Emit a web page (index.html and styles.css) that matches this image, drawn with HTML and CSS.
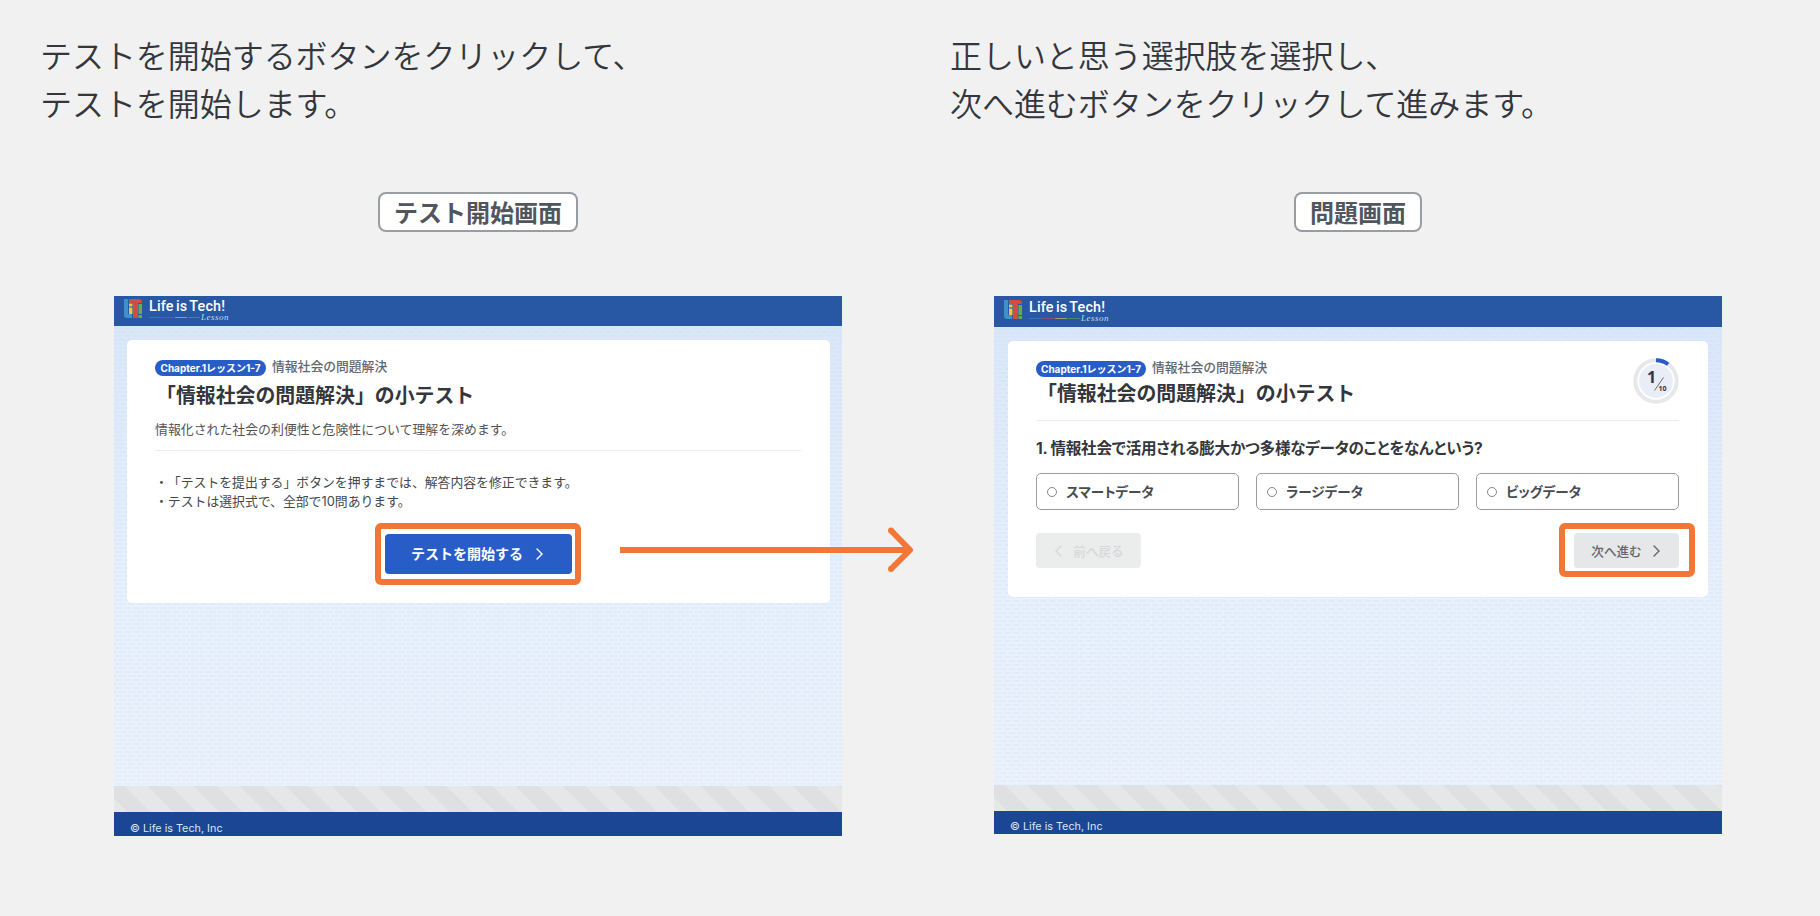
FILE: index.html
```html
<!DOCTYPE html>
<html lang="ja">

<head>
    <meta charset="UTF-8">
    <meta name="viewport" content="width=device-width, initial-scale=1.0">
    <title>小テストの受け方</title>
    <link rel="stylesheet" href="styles.css">
</head>

<body>
    <svg class="symbols" width="0" height="0">
        <symbol id="logo" viewBox="0 0 18 19">
            <path d="M0 0h4v15h4v4H3a3 3 0 0 1-3-3z" fill="#3f92c8"/>
            <path d="M5 0h10a3 3 0 0 1 3 3v1h-4v15H9V4H5z" fill="#cf4d43"/>
            <path d="M5 4.600h3.500v3H5zM5 8.500h3.500V15H5z" fill="#f2c437"/>
            <path d="M14.500 5H18v10h-3.500zM14.500 16H18v3h-3.500z" fill="#67ad45"/>
        </symbol>
        <symbol id="chevron" viewBox="0 0 7 12">
            <path d="M1 1l5 5-5 5" fill="none" stroke="currentColor" stroke-width="1.400" stroke-linecap="round"/>
        </symbol>
    </svg>

    <main class="guide">
        <section class="step step-start">
            <h2>テストを開始するボタンをクリックして、<br>テストを開始します。</h2>
            <div class="figure">
                <span class="label">テスト開始画面</span>
                <div class="screen">
                    <header class="bar">
                        <svg class="logo"><use href="#logo"/></svg>
                        <div class="brand">
                            <span class="brand-name">Life is Tech!</span>
                            <div class="brand-sub"><i></i><i></i><i></i><i></i><em>Lesson</em></div>
                        </div>
                    </header>
                    <div class="content">
                        <div class="card">
                            <div class="meta"><span class="chapter">Chapter.1レッスン1-7</span><span class="subject">情報社会の問題解決</span></div>
                            <h1>「情報社会の問題解決」の小テスト</h1>
                            <p class="desc">情報化された社会の利便性と危険性について理解を深めます。</p>
                            <ul class="notes">
                                <li>・「テストを提出する」ボタンを押すまでは、解答内容を修正できます。</li>
                                <li>・テストは選択式で、全部で10問あります。</li>
                            </ul>
                            <button class="btn btn-start marked"><span>テストを開始する</span><svg class="chevron"><use href="#chevron"/></svg></button>
                        </div>
                    </div>
                    <div class="stripes"></div>
                    <footer>© Life is Tech, Inc</footer>
                </div>
            </div>
        </section>

        <section class="step step-question">
            <h2>正しいと思う選択肢を選択し、<br>次へ進むボタンをクリックして進みます。</h2>
            <div class="figure">
                <span class="label">問題画面</span>
                <div class="screen">
                    <header class="bar">
                        <svg class="logo"><use href="#logo"/></svg>
                        <div class="brand">
                            <span class="brand-name">Life is Tech!</span>
                            <div class="brand-sub"><i></i><i></i><i></i><i></i><em>Lesson</em></div>
                        </div>
                    </header>
                    <div class="content">
                        <div class="card">
                            <div class="card-head">
                                <div>
                                    <div class="meta"><span class="chapter">Chapter.1レッスン1-7</span><span class="subject">情報社会の問題解決</span></div>
                                    <h1>「情報社会の問題解決」の小テスト</h1>
                                </div>
                                <svg class="progress" viewBox="0 0 46 46">
                                    <circle cx="23" cy="23" r="20.700" fill="none" stroke="#e7e8e9" stroke-width="4"/>
                                    <path d="M23 2.300A20.700 20.700 0 0 1 35.200 6.250" fill="none" stroke="#285dc7" stroke-width="4"/>
                                    <circle cx="23" cy="23" r="17" fill="#e9edf8"/>
                                    <text x="14" y="24.500" class="now">1</text>
                                    <path d="M30.500 19.500l-9 13" stroke="#444950" stroke-width=".8"/>
                                    <text x="25.500" y="33" class="total">10</text>
                                </svg>
                            </div>
                            <p class="question">1. 情報社会で活用される膨大かつ多様なデータのことをなんという?</p>
                            <div class="options">
                                <label><input type="radio" name="answer"><span>スマートデータ</span></label>
                                <label><input type="radio" name="answer"><span>ラージデータ</span></label>
                                <label><input type="radio" name="answer"><span>ビッグデータ</span></label>
                            </div>
                            <div class="actions">
                                <button class="btn btn-prev"><svg class="chevron"><use href="#chevron"/></svg><span>前へ戻る</span></button>
                                <button class="btn btn-next marked"><span>次へ進む</span><svg class="chevron"><use href="#chevron"/></svg></button>
                            </div>
                        </div>
                    </div>
                    <div class="stripes"></div>
                    <footer>© Life is Tech, Inc</footer>
                </div>
            </div>
        </section>

        <svg class="arrow" viewBox="0 0 296 48">
            <path d="M0 24h290M271 4.500L290 24 271 43" fill="none" stroke="#f27737" stroke-width="6" stroke-linejoin="round"/>
            <circle cx="271" cy="4.500" r="3" fill="#f27737"/>
            <circle cx="271" cy="43" r="3" fill="#f27737"/>
        </svg>
    </main>
</body>

</html>
```
FILE: styles.css
```css
* {
  box-sizing: border-box;
}
body {
  margin: 0;
  background-color: #f1f1f1;
  color: #33363c;
  font-family: Inter, 'Noto Sans CJK JP', sans-serif;
  text-spacing-trim: space-all;
}
h1, h2, p, ul {
  margin: 0;
  padding: 0;
}
.symbols {
  position: absolute;
}
.guide {
  position: relative;
  display: grid;
  grid-template-columns: 910px 910px;
  height: 916px;
  padding-top: 30px;
  overflow: hidden;
}
h2 {
  padding-left: 40px;
  font-family: 'Noto Sans CJK JP', sans-serif;
  font-size: 32px;
  font-weight: 350;
  line-height: 48px;
  letter-spacing: -0.05px;
  white-space: nowrap;
}
.figure {
  display: flex;
  flex-direction: column;
  align-items: center;
  gap: 64px;
  width: 728px;
  margin: 66px 0 0 114px;
}
.step-question .figure {
  margin-left: 84px;
}
.label {
  height: 40px;
  padding: 0 14px;
  border: 2px solid #989da3;
  border-radius: 8px;
  background-color: #fff;
  color: #50565c;
  font-family: 'Noto Sans CJK JP', sans-serif;
  font-size: 24px;
  font-weight: 700;
  line-height: 35px;
}
.screen {
  display: flex;
  flex-direction: column;
  width: 728px;
  height: 540px;
}
.step-question .screen {
  height: 538px;
}

/* header */
.bar {
  display: flex;
  align-items: flex-start;
  gap: 7px;
  height: 30px;
  padding: 3px 10px 0;
  background-color: #2857a4;
}
.step-question .bar {
  height: 31px;
  padding-top: 4px;
}
.logo {
  width: 18px;
  height: 19px;
}
.brand {
  padding-top: 1px;
  color: #fff;
}
.brand-name {
  display: block;
  font-family: Roboto, sans-serif;
  font-size: 14.3px;
  font-weight: 500;
  line-height: 12px;
  letter-spacing: 0.2px;
  word-spacing: -1.5px;
  white-space: nowrap;
}
.brand-sub {
  display: flex;
  align-items: center;
  gap: 1px;
  height: 9px;
  margin-top: 1px;
}
.brand-sub i {
  width: 12px;
  height: 1px;
  background-color: #2d78bd;
}
.brand-sub i:nth-child(2) {
  background-color: #8c4c78;
}
.brand-sub i:nth-child(3) {
  background-color: #a09a70;
}
.brand-sub i:nth-child(4) {
  background-color: #46886a;
}
.brand-sub em {
  color: #cbd9f0;
  font-family: 'Liberation Serif', cursive;
  font-size: 9px;
  line-height: 9px;
  letter-spacing: 0.5px;
}

/* page area */
.content {
  flex: 1;
  padding: 14px 12px 0 13px;
  background:
    url("data:image/svg+xml,%3Csvg xmlns='http://www.w3.org/2000/svg' width='18' height='8'%3E%3Cpath d='M1 1h7v2H1zM10 1h7v2h-7zM5 5h7v2H5zM14 5h4v2h-4zM0 5h3v2H0z' fill='%23bdd5f4' fill-opacity='.2'/%3E%3C/svg%3E"),
    linear-gradient(#dbe7f9, #e7f0fb 55%, #ecf2fc);
}
.step-question .content {
  padding: 14px 14px 0;
}
.card {
  height: 263px;
  padding: 20px 29px 0 28px;
  border-radius: 5px;
  background-color: #fff;
}
.step-question .card {
  height: 256px;
}
.meta {
  display: flex;
  align-items: center;
  gap: 6px;
  height: 16px;
}
.chapter {
  width: 111px;
  height: 16px;
  border-radius: 8px;
  background-color: #285dc7;
  color: #fff;
  font-size: 10px;
  font-weight: 700;
  line-height: 16px;
  text-align: center;
  white-space: nowrap;
}
.subject {
  margin-top: -2px;
  color: #63686e;
  font-size: 12.8px;
  font-weight: 500;
  line-height: 16px;
}
.step-question .chapter {
  width: 110px;
}
h1 {
  margin-top: 8px;
  font-size: 19.9px;
  font-weight: 700;
  line-height: 24px;
  text-indent: 1px;
  white-space: nowrap;
}
.desc {
  height: 43px;
  padding-top: 12px;
  border-bottom: 1px solid #ebecec;
  color: #505459;
  font-size: 12.9px;
  line-height: 20px;
}
.notes {
  margin-top: 23px;
  list-style: none;
  color: #44484d;
  font-size: 12.85px;
  line-height: 18.7px;
}

/* buttons */
.btn {
  position: relative;
  display: flex;
  align-items: center;
  justify-content: center;
  padding: 0;
  border: none;
  border-radius: 4px;
  font-family: inherit;
  white-space: nowrap;
}
.btn span {
  padding-bottom: 1px;
}
.chevron {
  width: 7px;
  height: 12px;
}
.btn-start {
  gap: 13px;
  width: 187px;
  height: 40px;
  margin: 23px auto 0 230px;
  padding-right: 3px;
  background-color: #285dc7;
  color: #fff;
  font-size: 14px;
  font-weight: 700;
}
.btn-start span {
  padding-bottom: 3px;
}
.btn-prev, .btn-next {
  gap: 11px;
  width: 105px;
  height: 35px;
  font-size: 12.6px;
  font-weight: 500;
}
.btn-prev {
  padding-left: 2px;
  background-color: #ebecec;
  color: #d6d8da;
}
.btn-prev .chevron {
  transform: rotate(180deg);
}
.btn-next {
  padding-right: 2px;
  background-color: #e6e7e9;
  color: #61666c;
}
.marked::after {
  content: '';
  position: absolute;
  inset: -11px -9px -11px -10px;
  border: 6px solid #f27737;
  border-radius: 6px;
}
.btn-next.marked::after {
  inset: -10px -16px -9px -15px;
}

/* question */
.card-head {
  display: flex;
  justify-content: space-between;
  height: 60px;
  border-bottom: 1px solid #ebecec;
}
.card-head h1 {
  margin-top: 5px;
}
.progress {
  width: 46px;
  height: 46px;
  margin-top: -3px;
}
.progress text {
  fill: #33363c;
  font-family: 'Noto Sans', sans-serif;
  font-weight: 700;
}
.progress .now {
  font-size: 16px;
}
.progress .total {
  font-size: 7px;
}
.question {
  margin-top: 17px;
  font-size: 15.6px;
  font-weight: 700;
  line-height: 22px;
  letter-spacing: -0.25px;
  font-feature-settings: 'palt';
  white-space: nowrap;
}
.options {
  display: grid;
  grid-template-columns: repeat(3, 1fr);
  gap: 17px;
  margin-top: 13px;
}
.options label {
  display: flex;
  align-items: center;
  gap: 9px;
  height: 37px;
  padding-left: 10px;
  border: 1px solid #989da3;
  border-radius: 5px;
  color: #484d53;
  font-size: 13.6px;
  font-weight: 700;
  font-feature-settings: 'palt';
}
.options span {
  padding-bottom: 2px;
}
.options input {
  appearance: none;
  width: 10px;
  height: 10px;
  margin: 0;
  border: 1px solid #898989;
  border-radius: 50%;
}
.actions {
  display: flex;
  justify-content: space-between;
  margin-top: 23px;
}

/* bottom of the screen */
.stripes {
  height: 26px;
  background: repeating-linear-gradient(45deg, #e6e7e9 0 9.2px, #dfe0e2 9.2px 25.5px, #e6e7e9 25.5px 32.6px);
}
footer {
  height: 24px;
  padding: 8px 16px 0;
  background-color: #1b4693;
  color: #dde5f3;
  font-size: 10.8px;
  line-height: 18px;
  overflow: hidden;
}
.step-question footer {
  height: 23px;
  padding-top: 7px;
}

.arrow {
  position: absolute;
  left: 620px;
  top: 526px;
  width: 296px;
  height: 48px;
}
```
